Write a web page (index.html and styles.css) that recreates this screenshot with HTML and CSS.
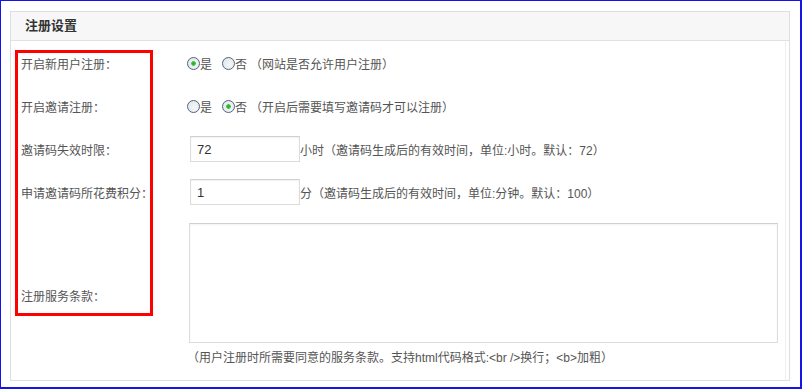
FILE: index.html
```html
<!DOCTYPE html>
<html lang="zh-CN">
<head>
<meta charset="utf-8">
<title>注册设置</title>
<link rel="stylesheet" href="styles.css">
</head>
<body>
<div class="frame">
  <div class="panel">
    <div class="panel-head">注册设置</div>
    <div class="panel-body">
      <div class="row">
        <div class="label">开启新用户注册：</div>
        <div class="field">
          <label class="opt"><input type="radio" class="radio" name="reg" checked>是</label>
          <label class="opt"><input type="radio" class="radio" name="reg">否</label>
          <span class="desc desc-gap">（网站是否允许用户注册）</span>
        </div>
      </div>
      <div class="row">
        <div class="label">开启邀请注册：</div>
        <div class="field">
          <label class="opt"><input type="radio" class="radio" name="inv">是</label>
          <label class="opt"><input type="radio" class="radio" name="inv" checked>否</label>
          <span class="desc desc-gap">（开启后需要填写邀请码才可以注册）</span>
        </div>
      </div>
      <div class="row">
        <div class="label">邀请码失效时限：</div>
        <div class="field">
          <input type="text" class="text" value="72"><span class="desc">小时（邀请码生成后的有效时间，单位:小时。默认：72）</span>
        </div>
      </div>
      <div class="row">
        <div class="label">申请邀请码所花费积分：</div>
        <div class="field">
          <input type="text" class="text" value="1"><span class="desc">分（邀请码生成后的有效时间，单位:分钟。默认：100）</span>
        </div>
      </div>
      <div class="row row-area">
        <div class="label">注册服务条款：</div>
        <div class="field field-area">
          <textarea class="area"></textarea>
          <div class="hint">（用户注册时所需要同意的服务条款。支持html代码格式:&lt;br /&gt;换行；&lt;b&gt;加粗）</div>
        </div>
      </div>
    </div>
  </div>
  <div class="highlight"></div>
</div>
</body>
</html>
```

FILE: styles.css
```css
html, body {
  margin: 0;
  padding: 0;
  background: #fff;
}

body {
  font-family: "Liberation Sans", "Noto Sans CJK SC", sans-serif;
  font-size: 12px;
  color: #555;
  text-spacing-trim: space-all;
}

.frame {
  position: relative;
  width: 802px;
  height: 389px;
  box-sizing: border-box;
  border-style: solid;
  border-color: #1414e6;
  border-width: 1px 2px 2px 1px;
  padding: 10px 10px 0 9px;
}

.panel {
  width: 780px;
  height: 370px;
  box-sizing: border-box;
  border: 1px solid #dedede;
  box-shadow: inset -3px 0 0 #fff, inset -4px 0 0 #efefef;
  background: #fff;
}

.panel-head {
  height: 28px;
  line-height: 28px;
  padding-left: 14px;
  background: #f7f7f7;
  border-bottom: 1px solid #e2e2e2;
  font-size: 13px;
  font-weight: bold;
  color: #333;
}

.panel-body {
  padding-top: 9px;
  display: flex;
  flex-direction: column;
  gap: 17px;
}

.row {
  display: flex;
  align-items: center;
  min-height: 26px;
}

.label {
  width: 166px;
  padding-left: 10px;
  flex: none;
  color: #555;
  white-space: nowrap;
}

.field {
  display: flex;
  align-items: center;
  white-space: nowrap;
}

.opt {
  display: inline-flex;
  align-items: center;
}

.opt + .opt {
  margin-left: 10px;
}

.radio {
  appearance: none;
  -webkit-appearance: none;
  margin: 0;
  width: 13px;
  height: 13px;
  box-sizing: border-box;
  border: 1px solid #4a6584;
  border-radius: 50%;
  background: radial-gradient(circle at 60% 60%, #f6f6f6 0, #dfe3e8 100%);
}

.radio:checked {
  background:
    radial-gradient(circle, #2aaa2a 0, #3cc43c 2px, rgba(60, 196, 60, 0) 2.6px),
    radial-gradient(circle at 60% 60%, #f6f6f6 0, #dfe3e8 100%);
}

.desc {
  color: #555;
}

.desc-gap {
  margin-left: 3px;
}

.text {
  margin: 0 0 0 3px;
  width: 110px;
  height: 26px;
  box-sizing: border-box;
  border: 1px solid #dcdcdc;
  border-top-color: #cfcfcf;
  box-shadow: inset 0 1px 2px rgba(0, 0, 0, 0.06);
  padding: 0 6px;
  font-family: "Liberation Sans", sans-serif;
  font-size: 13px;
  color: #333;
  outline: none;
}

.row-area {
  min-height: 146px;
}

.field-area {
  flex-direction: column;
  align-items: flex-start;
}

.area {
  margin: 0 0 0 2px;
  width: 589px;
  height: 120px;
  box-sizing: border-box;
  border: 1px solid #dcdcdc;
  border-top-color: #d0d0d0;
  box-shadow: inset 0 1px 2px rgba(0, 0, 0, 0.05);
  resize: none;
  outline: none;
}

.hint {
  margin-top: 5px;
  line-height: 20px;
  color: #555;
}

.highlight {
  position: absolute;
  left: 14px;
  top: 49px;
  width: 138px;
  height: 266px;
  box-sizing: border-box;
  border: 3px solid #ff0000;
}
```
